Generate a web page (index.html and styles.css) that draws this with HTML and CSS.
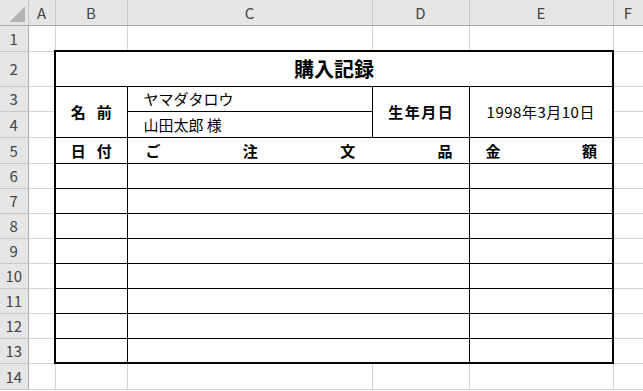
FILE: index.html
```html
<!DOCTYPE html>
<html lang="ja">
<head>
    <meta charset="UTF-8">
    <meta name="viewport" content="width=device-width, initial-scale=1.0">
    <title>購入記録</title>
    <link rel="stylesheet" href="styles.css">
</head>
<body>
    <table class="sheet">
        <colgroup>
            <col class="col-head">
            <col class="col-a">
            <col class="col-b">
            <col class="col-c">
            <col class="col-d">
            <col class="col-e">
            <col class="col-f">
        </colgroup>
        <thead>
            <tr class="row-head">
                <th class="corner"></th>
                <th>A</th><th>B</th><th>C</th><th>D</th><th>E</th><th>F</th>
            </tr>
        </thead>
        <tbody>
            <tr class="row-tall">
                <th>1</th><td></td><td></td><td></td><td></td><td></td><td></td>
            </tr>
            <tr class="row-title">
                <th>2</th><td></td>
                <td colspan="4" class="box edge-top edge-left edge-right title">購入記録</td>
                <td></td>
            </tr>
            <tr>
                <th>3</th><td></td>
                <td rowspan="2" class="box edge-left label spaced">名前</td>
                <td class="box name">ヤマダタロウ</td>
                <td rowspan="2" class="box label birth">生年月日</td>
                <td rowspan="2" class="box edge-right date">1998年3月10日</td>
                <td></td>
            </tr>
            <tr class="row-tall">
                <th>4</th><td></td>
                <td class="box name">山田太郎 様</td>
                <td></td>
            </tr>
            <tr class="row-tall">
                <th>5</th><td></td>
                <td class="box edge-left label spaced">日付</td>
                <td colspan="2" class="box label spread">ご 注 文 品</td>
                <td class="box edge-right label spread spread-e">金 額</td>
                <td></td>
            </tr>
            <tr><th>6</th><td></td><td class="box edge-left"></td><td colspan="2" class="box"></td><td class="box edge-right"></td><td></td></tr>
            <tr><th>7</th><td></td><td class="box edge-left"></td><td colspan="2" class="box"></td><td class="box edge-right"></td><td></td></tr>
            <tr><th>8</th><td></td><td class="box edge-left"></td><td colspan="2" class="box"></td><td class="box edge-right"></td><td></td></tr>
            <tr><th>9</th><td></td><td class="box edge-left"></td><td colspan="2" class="box"></td><td class="box edge-right"></td><td></td></tr>
            <tr><th>10</th><td></td><td class="box edge-left"></td><td colspan="2" class="box"></td><td class="box edge-right"></td><td></td></tr>
            <tr><th>11</th><td></td><td class="box edge-left"></td><td colspan="2" class="box"></td><td class="box edge-right"></td><td></td></tr>
            <tr><th>12</th><td></td><td class="box edge-left"></td><td colspan="2" class="box"></td><td class="box edge-right"></td><td></td></tr>
            <tr>
                <th>13</th><td></td>
                <td class="box edge-left edge-bottom"></td>
                <td colspan="2" class="box edge-bottom"></td>
                <td class="box edge-right edge-bottom"></td>
                <td></td>
            </tr>
            <tr class="row-tall">
                <th>14</th><td></td><td></td><td></td><td></td><td></td><td></td>
            </tr>
        </tbody>
    </table>
</body>
</html>
```

FILE: styles.css
```css
body {
    margin: 0;
    overflow: hidden;
    background: #fff;
    font-family: "Noto Sans CJK JP", "Noto Sans", sans-serif;
    color: #000;
}
.sheet {
    border-collapse: collapse;
    table-layout: fixed;
    width: 643px;
}
.col-head { width: 28px; }
.col-a { width: 27px; }
.col-b { width: 72px; }
.col-c { width: 245px; }
.col-d { width: 97px; }
.col-e { width: 144px; }
.col-f { width: 30px; }

tr { height: 25px; }
.row-tall { height: 26px; }
.row-title { height: 35px; }

th, td {
    padding: 0;
    font-size: 15px;
    line-height: 1;
    white-space: nowrap;
    overflow: hidden;
}
td {
    border-right: 1px solid #d4d4d4;
    border-bottom: 1px solid #d4d4d4;
}

/* row and column headers */
th {
    background: #e6e6e6;
    color: #444;
    font-weight: normal;
    text-align: center;
    border-right: 1px solid #c8c8c8;
    border-bottom: 1px solid #c8c8c8;
}
.row-head th {
    border-bottom: 1px solid #ababab;
}
tbody th {
    border-right: 1px solid #ababab;
}
.corner {
    background: linear-gradient(135deg, transparent 50%, #b4b4b4 50%) no-repeat right 3px bottom 3px / 16px 16px, #e6e6e6;
}

/* the ruled form */
.box { border: 1px solid #000; }
.edge-top { border-top: 2px solid #000; }
.edge-left { border-left: 2px solid #000; }
.edge-right { border-right: 2px solid #000; }
.edge-bottom { border-bottom: 2px solid #000; }

.title {
    text-align: center;
    font-size: 20px;
    font-weight: bold;
}
.label {
    font-weight: bold;
    text-align: center;
}
.spaced {
    letter-spacing: 11px;
    padding-left: 11px;
}
.birth {
    letter-spacing: 1.5px;
    padding-left: 1.5px;
}
.name {
    padding-left: 16px;
}
.date {
    text-align: center;
    letter-spacing: 0.5px;
}
.spread {
    text-align: justify;
    text-align-last: justify;
    padding: 0 16px 0 18px;
}
.spread-e {
    padding: 0 15px 0 16px;
}
```
